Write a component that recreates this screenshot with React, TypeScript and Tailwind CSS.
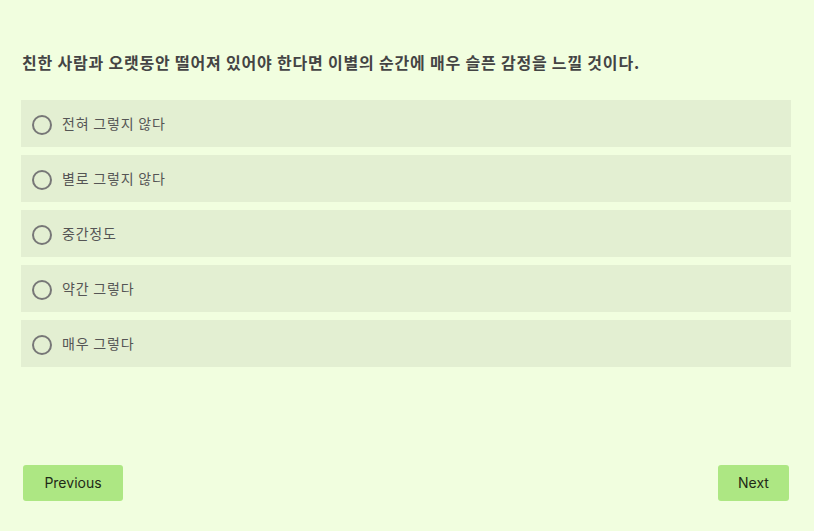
const options = ['전혀 그렇지 않다', '별로 그렇지 않다', '중간정도', '약간 그렇다', '매우 그렇다'];

export default function App() {
  return (
    <div
      className="flex h-[531px] w-[814px] flex-col bg-[#f1fedf] px-[21px] pt-[50px] pb-[30px]"
      style={{ fontFamily: '"Noto Sans CJK KR", "Noto Sans", sans-serif' }}
    >
      <h2 className="pl-px text-[16px] leading-[24px] font-bold tracking-[0.8px] text-[#444444]">
        친한 사람과 오랫동안 떨어져 있어야 한다면 이별의 순간에 매우 슬픈 감정을 느낄 것이다.
      </h2>

      <div className="mt-[26px] flex w-[770px] flex-col gap-2">
        {options.map((label) => (
          <label
            key={label}
            className="flex h-[47px] cursor-pointer items-center bg-[#e3efd2] pl-[11px]"
          >
            <span className="mt-[3px] h-5 w-5 shrink-0 rounded-full border-2 border-[#777777]" />
            <span className="ml-[10px] text-[14px] tracking-[0.8px] text-[#555555]">{label}</span>
          </label>
        ))}
      </div>

      <div
        className="mt-auto flex items-center justify-between pl-[2px] pr-[4px]"
        style={{ fontFamily: 'Inter, "Noto Sans", sans-serif' }}
      >
        <button className="h-9 w-[100px] rounded-[3px] bg-[#ade783] pb-px text-[14px] text-[#1f2a17]">
          Previous
        </button>
        <button className="h-9 w-[71px] rounded-[3px] bg-[#ade783] pb-px text-[14px] text-[#1f2a17]">
          Next
        </button>
      </div>
    </div>
  );
}
